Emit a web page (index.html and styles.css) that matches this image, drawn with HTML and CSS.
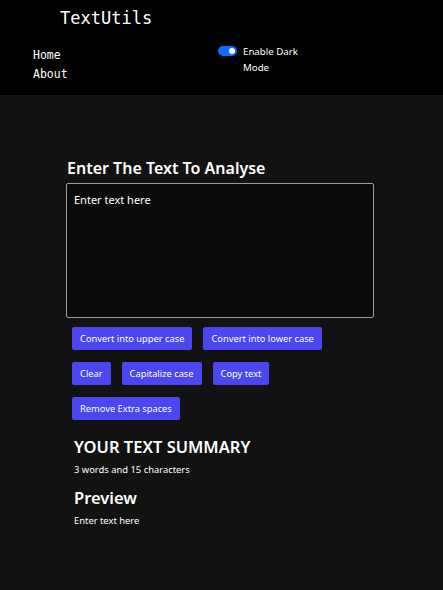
FILE: index.html
```html
<!DOCTYPE html>
<html>
<head>
<meta charset="utf-8">
<link rel="stylesheet" href="styles.css">
</head>
<body>
<header class="nav">
  <div class="brand">TextUtils</div>
  <div class="nav-row">
    <ul class="links">
      <li>Home</li>
      <li>About</li>
    </ul>
    <div class="mode">
      <span class="switch"><span class="knob"></span></span>
      <span class="mode-label">Enable Dark Mode</span>
    </div>
  </div>
</header>
<main class="main">
  <h1 class="title">Enter The Text To Analyse</h1>
  <div class="area">Enter text here</div>
  <div class="buttons">
    <button class="btn">Convert into upper case</button>
    <button class="btn">Convert into lower case</button>
    <button class="btn">Clear</button>
    <button class="btn">Capitalize case</button>
    <button class="btn">Copy text</button>
    <button class="btn">Remove Extra spaces</button>
  </div>
  <section class="summary">
    <h2 class="h2">YOUR TEXT SUMMARY</h2>
    <p class="small">3 words and 15 characters</p>
    <h2 class="h2 preview">Preview</h2>
    <p class="small">Enter text here</p>
  </section>
</main>
</body>
</html>
```
FILE: styles.css
```css
* { box-sizing: border-box; }
html, body { margin: 0; padding: 0; }
body {
  background: #121212;
  color: #fff;
  font-family: "Noto Sans", "Open Sans", sans-serif;
  width: 443px;
  height: 590px;
  overflow: hidden;
}
.nav {
  background: #000;
  height: 95px;
  padding: 8px 0 0 0;
}
.brand {
  font-family: "DejaVu Sans Mono", monospace;
  font-size: 17px;
  line-height: 20px;
  padding-left: 60px;
}
.nav-row {
  display: flex;
  padding-top: 16px;
}
.links {
  list-style: none;
  margin: 0;
  padding: 2px 0 0 33px;
  width: 218px;
  font-family: "DejaVu Sans Mono", monospace;
  font-size: 11.5px;
  line-height: 19px;
}
.mode {
  display: flex;
  align-items: flex-start;
  gap: 6px;
  padding-top: 2px;
}
.switch {
  width: 19px;
  height: 10px;
  background: #0d6efd;
  border-radius: 5px;
  position: relative;
  margin-top: 0;
  flex: none;
}
.knob {
  position: absolute;
  right: 2px;
  top: 2px;
  width: 6px;
  height: 6px;
  border-radius: 50%;
  background: #fff;
}
.mode-label {
  width: 60px;
  font-size: 9.7px;
  line-height: 16px;
  margin-top: -2px;
}
.main {
  padding: 63px 0 0 66px;
}
.title {
  margin: 0 0 5px 1px;
  font-size: 16px;
  line-height: 20px;
  font-weight: 600;
}
.area {
  width: 308px;
  height: 135px;
  background: #0b0b0b;
  border: 1px solid #9a9a9a;
  border-radius: 2px;
  padding: 9px 7px;
  font-size: 11px;
  line-height: 14px;
}
.buttons {
  display: flex;
  flex-wrap: wrap;
  width: 280px;
  padding-left: 6px;
  margin-top: 9px;
  column-gap: 11px;
  row-gap: 12px;
}
.btn {
  background: #4b46f0;
  color: #fff;
  border: none;
  border-radius: 2px;
  height: 23px;
  padding: 0 8px;
  font-family: "Noto Sans", sans-serif;
  font-size: 9.3px;
}
.summary {
  padding-left: 8px;
  margin-top: 16px;
}
.h2 {
  margin: 0;
  font-size: 16.5px;
  line-height: 22px;
  font-weight: 600;
}
.small {
  margin: 6px 0 0 0;
  font-size: 9.4px;
  line-height: 12px;
}
.preview { margin-top: 11px; }
```
